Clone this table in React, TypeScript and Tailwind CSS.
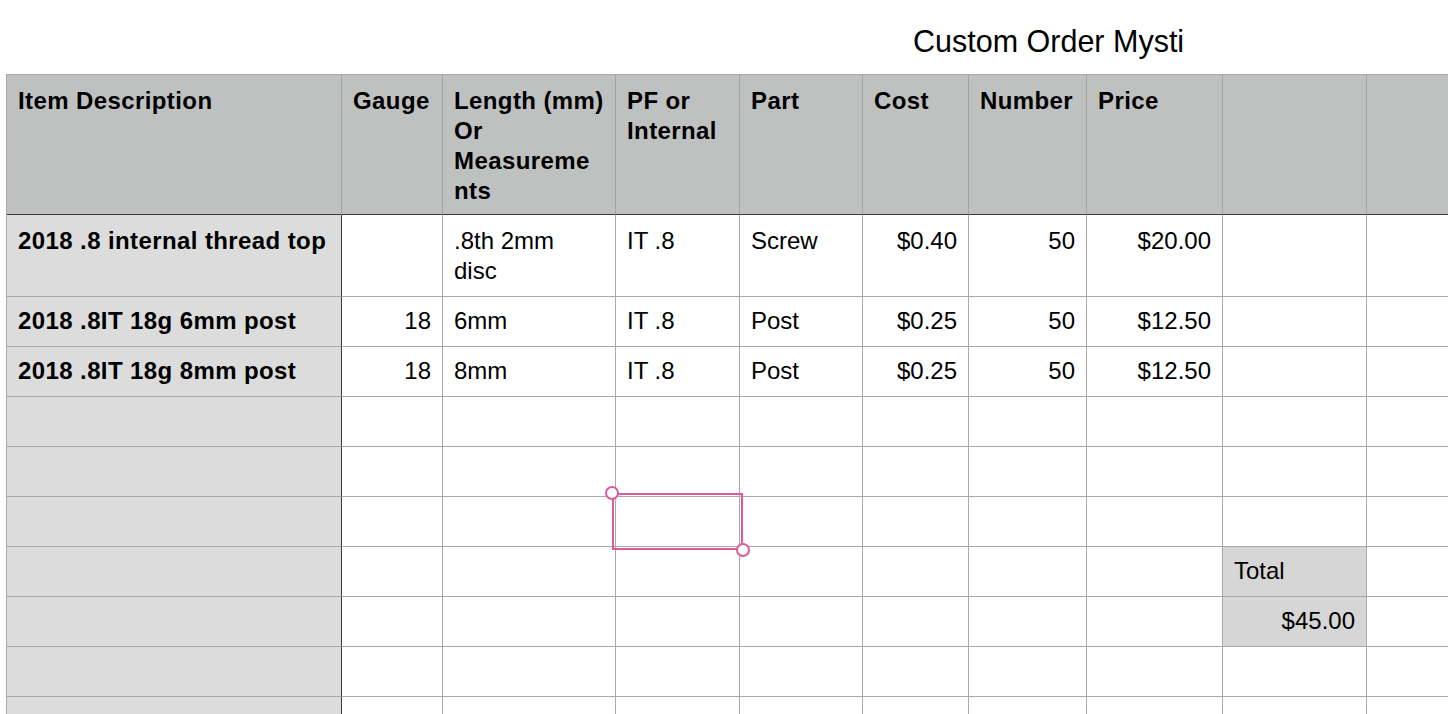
import React from 'react';

type Cell = {
  text?: React.ReactNode;
  align?: 'left' | 'right';
  bold?: boolean;
  shade?: 'item' | 'total';
};

const COLS = [335, 101, 173, 124, 123, 106, 118, 136, 144, 150];

const headers: React.ReactNode[] = [
  'Item Description',
  'Gauge',
  <>Length (mm)<br />Or<br />Measureme<br />nts</>,
  <>PF or<br />Internal</>,
  'Part',
  'Cost',
  'Number',
  'Price',
  '',
  '',
];

// rows of the sheet, first cell is the item description
const rows: { height: number; cells: Cell[] }[] = [
  {
    height: 82,
    cells: [
      { text: '2018 .8 internal thread top', bold: true, shade: 'item' },
      {},
      { text: <>.8th 2mm<br />disc</> },
      { text: 'IT .8' },
      { text: 'Screw' },
      { text: '$0.40', align: 'right' },
      { text: '50', align: 'right' },
      { text: '$20.00', align: 'right' },
      {},
      {},
    ],
  },
  {
    height: 50,
    cells: [
      { text: '2018 .8IT 18g 6mm post', bold: true, shade: 'item' },
      { text: '18', align: 'right' },
      { text: '6mm' },
      { text: 'IT .8' },
      { text: 'Post' },
      { text: '$0.25', align: 'right' },
      { text: '50', align: 'right' },
      { text: '$12.50', align: 'right' },
      {},
      {},
    ],
  },
  {
    height: 50,
    cells: [
      { text: '2018 .8IT 18g 8mm post', bold: true, shade: 'item' },
      { text: '18', align: 'right' },
      { text: '8mm' },
      { text: 'IT .8' },
      { text: 'Post' },
      { text: '$0.25', align: 'right' },
      { text: '50', align: 'right' },
      { text: '$12.50', align: 'right' },
      {},
      {},
    ],
  },
];

const blank = (): Cell[] => COLS.map((_, i) => (i === 0 ? { shade: 'item' } : {}));

for (let r = 0; r < 8; r++) {
  const cells = blank();
  if (r === 3) cells[8] = { text: 'Total', shade: 'total' };
  if (r === 4) cells[8] = { text: '$45.00', align: 'right', shade: 'total' };
  rows.push({ height: 50, cells });
}

function BodyCell({ cell, col, height }: { cell: Cell; col: number; height: number }) {
  const bg =
    cell.shade === 'item' ? 'bg-[#dcdcdc]' : cell.shade === 'total' ? 'bg-[#d6d6d6]' : 'bg-white';
  const rightBorder = col === 0 ? 'border-r-[#3a3a3a]' : 'border-r-[#a9a9a9]';
  return (
    <div
      className={`shrink-0 border-r border-b border-b-[#a9a9a9] ${rightBorder} ${bg} ${
        height > 50 ? 'pt-[11px]' : 'pt-[9px]'
      } pl-[11px] pr-[11px] ${cell.align === 'right' ? 'text-right' : 'text-left'} ${
        cell.bold ? 'font-bold tracking-[0.4px]' : 'font-normal'
      }`}
      style={{ width: COLS[col], height }}
    >
      {cell.text}
    </div>
  );
}

export default function App() {
  return (
    <div
      className="relative w-[1448px] h-[714px] overflow-hidden bg-white text-black"
      style={{ fontFamily: '"Liberation Sans", Arial, sans-serif' }}
    >
      <div className="pt-[24px] pl-[913px] text-[30.5px] leading-[34px] whitespace-nowrap">
        Custom Order Mysti
      </div>

      <div className="mt-[16px] ml-[6px] w-max border-l border-t border-[#a9a9a9] text-[24px] leading-[30px] whitespace-nowrap">
        {/* header */}
        <div className="flex">
          {headers.map((h, i) => (
            <div
              key={i}
              className="shrink-0 h-[140px] bg-[#bfc1c0] border-r border-r-[#a2a4a3] border-b border-b-[#3a3a3a] pt-[11px] pl-[11px] font-bold tracking-[0.4px]"
              style={{ width: COLS[i] }}
            >
              {h}
            </div>
          ))}
        </div>

        {rows.map((row, ri) => (
          <div key={ri} className="flex">
            {row.cells.map((c, ci) => (
              <BodyCell key={ci} cell={c} col={ci} height={row.height} />
            ))}
          </div>
        ))}
      </div>

      {/* selected shape */}
      <div className="absolute left-[612px] top-[493px] w-[131px] h-[57px] border-2 border-[#e05a9a]" />
      <div className="absolute left-[605px] top-[486px] w-[14px] h-[14px] rounded-full border-2 border-[#e05a9a] bg-white" />
      <div className="absolute left-[736px] top-[543px] w-[14px] h-[14px] rounded-full border-2 border-[#e05a9a] bg-white" />
    </div>
  );
}
